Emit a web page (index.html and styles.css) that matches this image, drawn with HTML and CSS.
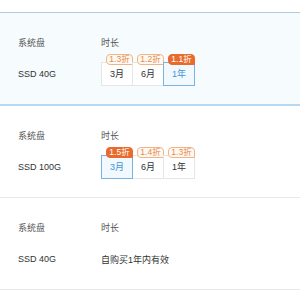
FILE: index.html
```html
<!DOCTYPE html>
<html lang="zh">
<head>
<meta charset="utf-8">
<link rel="stylesheet" href="styles.css">
</head>
<body>
<div class="list">
  <div class="card selected">
    <div class="row head"><span class="label">系统盘</span><span>时长</span></div>
    <div class="row vals">
      <span class="label val">SSD 40G</span>
      <div class="opts">
        <div class="opt"><span class="badge">1.3折</span>3月</div>
        <div class="opt"><span class="badge">1.2折</span>6月</div>
        <div class="opt on"><span class="badge">1.1折</span>1年</div>
      </div>
    </div>
  </div>
  <div class="card">
    <div class="row head"><span class="label">系统盘</span><span>时长</span></div>
    <div class="row vals">
      <span class="label val">SSD 100G</span>
      <div class="opts">
        <div class="opt on"><span class="badge">1.5折</span>3月</div>
        <div class="opt"><span class="badge">1.4折</span>6月</div>
        <div class="opt"><span class="badge">1.3折</span>1年</div>
      </div>
    </div>
  </div>
  <div class="card">
    <div class="row head"><span class="label">系统盘</span><span>时长</span></div>
    <div class="row vals">
      <span class="label val">SSD 40G</span>
      <span class="val">自购买1年内有效</span>
    </div>
  </div>
</div>
</body>
</html>
```
FILE: styles.css
```css
html, body {
  margin: 0;
  padding: 0;
  background: #fff;
}
body {
  padding-top: 12px;
  font-family: "Liberation Sans", "Noto Sans CJK SC", sans-serif;
  font-size: 9px;
  color: #333;
}
.card {
  padding: 23px 0 18px 18px;
  border-bottom: 1px solid #e8e8e8;
  height: 50px;
}
.card.selected {
  background: #f6fbfe;
  border-top: 1px solid #b3c9dc;
  border-bottom: 2px solid #b6d9f3;
}
.row {
  display: flex;
  align-items: center;
}
.label {
  width: 83px;
  flex: none;
}
.head {
  height: 14px;
  line-height: 14px;
  color: #555;
}
.vals {
  margin-top: 12px;
  height: 24px;
}
.val {
  color: #333;
}
.opts {
  display: flex;
}
.opt {
  position: relative;
  width: 30px;
  height: 22px;
  line-height: 22px;
  text-align: center;
  border: 1px solid #e6e6e6;
  margin-left: -1px;
  background: #fff;
  color: #333;
}
.opt:first-child {
  margin-left: 0;
}
.opt.on {
  border-color: #7ab5e2;
  background: #f1f8fe;
  color: #3f95d6;
  z-index: 1;
}
.badge {
  position: absolute;
  top: -9px;
  right: -1px;
  width: 25px;
  height: 9px;
  line-height: 9px;
  font-size: 8.5px;
  text-align: center;
  color: #e48a4c;
  background: #fff8f0;
  border: 1px solid #efb58a;
  border-radius: 4px 4px 0 4px;
}
.opt.on .badge {
  background: #e86a2c;
  border-color: #e86a2c;
  color: #fff;
}
```
